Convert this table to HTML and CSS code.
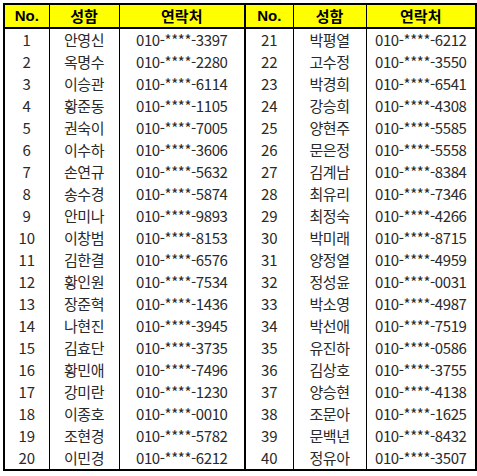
FILE: index.html
```html
<!DOCTYPE html>
<html lang="ko">
<head>
<meta charset="utf-8">
<link rel="stylesheet" href="styles.css">
</head>
<body>
<table class="list">
<colgroup>
<col class="c-no"><col class="c-name"><col class="c-tel1">
<col class="c-no2"><col class="c-name2"><col class="c-tel2">
</colgroup>
<thead>
<tr><th>No.</th><th>성함</th><th>연락처</th><th>No.</th><th>성함</th><th>연락처</th></tr>
</thead>
<tbody>
<tr><td>1</td><td>안영신</td><td>010-****-3397</td><td>21</td><td>박평열</td><td>010-****-6212</td></tr>
<tr><td>2</td><td>옥명수</td><td>010-****-2280</td><td>22</td><td>고수정</td><td>010-****-3550</td></tr>
<tr><td>3</td><td>이승관</td><td>010-****-6114</td><td>23</td><td>박경희</td><td>010-****-6541</td></tr>
<tr><td>4</td><td>황준동</td><td>010-****-1105</td><td>24</td><td>강승희</td><td>010-****-4308</td></tr>
<tr><td>5</td><td>권숙이</td><td>010-****-7005</td><td>25</td><td>양현주</td><td>010-****-5585</td></tr>
<tr><td>6</td><td>이수하</td><td>010-****-3606</td><td>26</td><td>문은정</td><td>010-****-5558</td></tr>
<tr><td>7</td><td>손연규</td><td>010-****-5632</td><td>27</td><td>김계남</td><td>010-****-8384</td></tr>
<tr><td>8</td><td>송수경</td><td>010-****-5874</td><td>28</td><td>최유리</td><td>010-****-7346</td></tr>
<tr><td>9</td><td>안미나</td><td>010-****-9893</td><td>29</td><td>최정숙</td><td>010-****-4266</td></tr>
<tr><td>10</td><td>이창범</td><td>010-****-8153</td><td>30</td><td>박미래</td><td>010-****-8715</td></tr>
<tr><td>11</td><td>김한결</td><td>010-****-6576</td><td>31</td><td>양정열</td><td>010-****-4959</td></tr>
<tr><td>12</td><td>황인원</td><td>010-****-7534</td><td>32</td><td>정성윤</td><td>010-****-0031</td></tr>
<tr><td>13</td><td>장준혁</td><td>010-****-1436</td><td>33</td><td>박소영</td><td>010-****-4987</td></tr>
<tr><td>14</td><td>나현진</td><td>010-****-3945</td><td>34</td><td>박선애</td><td>010-****-7519</td></tr>
<tr><td>15</td><td>김효단</td><td>010-****-3735</td><td>35</td><td>유진하</td><td>010-****-0586</td></tr>
<tr><td>16</td><td>황민애</td><td>010-****-7496</td><td>36</td><td>김상호</td><td>010-****-3755</td></tr>
<tr><td>17</td><td>강미란</td><td>010-****-1230</td><td>37</td><td>양승현</td><td>010-****-4138</td></tr>
<tr><td>18</td><td>이종호</td><td>010-****-0010</td><td>38</td><td>조문아</td><td>010-****-1625</td></tr>
<tr><td>19</td><td>조현경</td><td>010-****-5782</td><td>39</td><td>문백년</td><td>010-****-8432</td></tr>
<tr><td>20</td><td>이민경</td><td>010-****-6212</td><td>40</td><td>정유아</td><td>010-****-3507</td></tr>
</tbody>
</table>
</body>
</html>
```

FILE: styles.css
```css
html, body {
  margin: 0;
  padding: 0;
  background: #ffffff;
}
body {
  padding: 3px 0 0 3px;
  font-family: "Noto Sans CJK KR", "Noto Sans", sans-serif;
  color: #2a2a2a;
}
.list {
  border-collapse: collapse;
  table-layout: fixed;
  width: 472px;
  border: 2px solid #000;
}
.c-no { width: 45px; }
.c-name { width: 70px; }
.c-tel1 { width: 126px; }
.c-no2 { width: 48px; }
.c-name2 { width: 73px; }
.c-tel2 { width: 110px; }
.list th {
  background: #ffff00;
  height: 22px;
  padding: 0;
  font-size: 15px;
  font-weight: 700;
  line-height: 22px;
  border-left: 1px solid #000;
  border-bottom: 2px solid #000;
  text-align: center;
  color: #000;
}
.list th:first-child { font-family: "Liberation Sans", Arial, sans-serif; }
.list th:nth-child(4) { font-family: "Liberation Sans", Arial, sans-serif; border-left-width: 2px; }
.list td {
  height: 22px;
  padding: 0;
  font-size: 15px;
  font-weight: 400;
  line-height: 22px;
  text-align: center;
  border-left: 1px solid #000;
  white-space: nowrap;
}
.list td:nth-child(3n) { letter-spacing: -0.4px; }
.list td:nth-child(3n+2) { letter-spacing: -0.5px; }
.list td:nth-child(4) { border-left-width: 2px; }
```
